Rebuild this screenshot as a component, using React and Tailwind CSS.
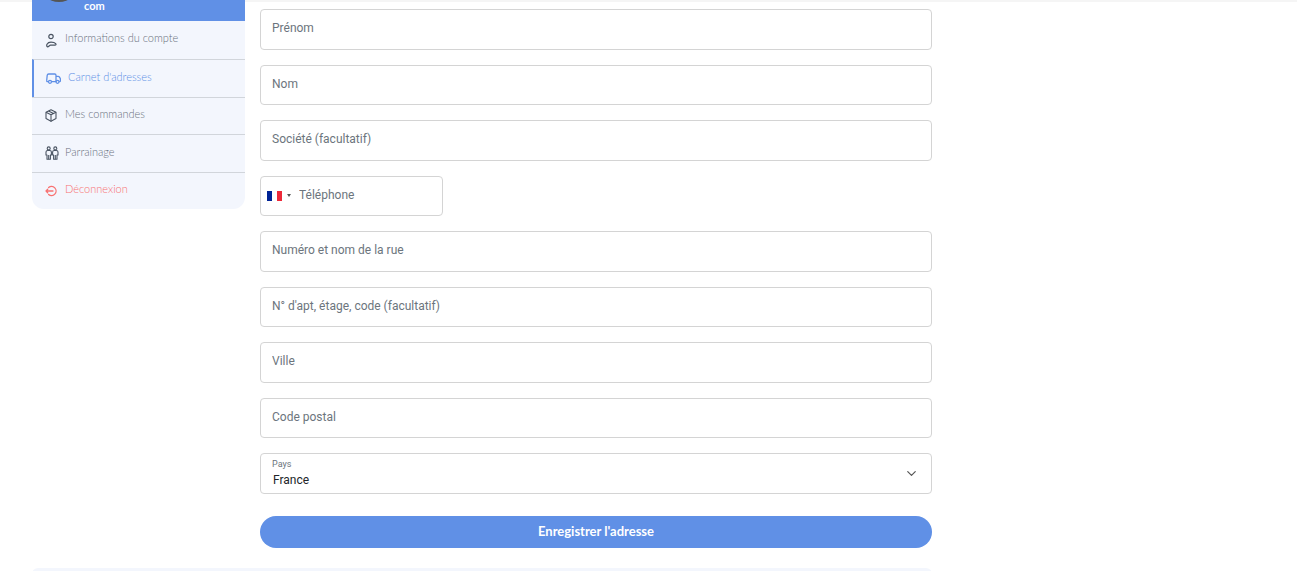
import React from "react";
import { ChevronDown } from "lucide-react";

const UserIcon = () => (
  <svg width="14" height="15" viewBox="0 0 14 15" fill="none" stroke="#4b5563" strokeWidth="1.2" strokeLinecap="round">
    <circle cx="6" cy="3.500" r="2.200" />
    <path d="M2.600 13.800c-.9-.2-1.200-1.400-.6-2.600.7-1.300 2.200-2.100 4-2.100 1.900 0 3.800.5 4.700 1.500.7.800.2 1.600-.8 1.600H5.500c-1 0-1.700 1.400-2.900 1.600z" />
  </svg>
);

const TruckIcon = () => (
  <svg width="15" height="11" viewBox="0 0 15 11" fill="none" stroke="#6090e6" strokeWidth="1.300" strokeLinejoin="round">
    <path d="M2.300 8.600h-.7C.9 8.600.6 8.100.7 7.400l.5-5C1.300 1.500 1.900 1 2.700 1h6c.8 0 1.300.5 1.300 1.200v6.400H5.800" />
    <path d="M10 3.400h2.200c.6 0 1 .3 1.300.7l.9 1.700v2.100c0 .4-.3.7-.7.7h-.6" />
    <circle cx="4" cy="8.800" r="1.500" />
    <circle cx="11.500" cy="8.800" r="1.500" />
  </svg>
);

const BoxIcon = () => (
  <svg width="12" height="13" viewBox="0 0 12 13" fill="none" stroke="#4b5563" strokeWidth="1.100" strokeLinejoin="round">
    <path d="M6 .8l5 2.400v6.400l-5 2.600-5-2.600V3.200z" />
    <path d="M1 3.200l5 2.600 5-2.600M6 5.800v6.600M3.500 2l5 2.500" />
  </svg>
);

const PeopleIcon = () => (
  <svg width="14" height="14" viewBox="0 0 14 14" fill="none" stroke="#4b5563" strokeWidth="1.100" strokeLinejoin="round">
    <circle cx="3.700" cy="2.400" r="1.500" />
    <circle cx="10.300" cy="2.400" r="1.500" />
    <path d="M1 6c0-1 .8-1.500 1.700-1.500h2C5.700 4.500 6.400 5 6.400 6v3H5.400v4.300H2V9H1z" />
    <path d="M7.600 6c0-1 .8-1.500 1.700-1.500h2c1 0 1.700.5 1.700 1.500v3h-1v4.300H8.600V9h-1z" />
    <path d="M3.700 9v4.300M10.300 9v4.300" />
  </svg>
);

const LogoutIcon = () => (
  <svg width="13" height="12" viewBox="0 0 13 12" fill="none" stroke="#f87171" strokeWidth="1.300" strokeLinecap="round" strokeLinejoin="round">
    <path d="M3.600 2.600a4.500 4.500 0 1 1 0 6.800" />
    <path d="M8 6H1M2.700 4.300L1 6l1.700 1.700" />
  </svg>
);

const links = [
  { label: "Informations du compte", icon: <UserIcon />, cls: "h-[38px] text-[#6b7280] pl-[13px] gap-[6px]" },
  { label: "Carnet d'adresses", icon: <TruckIcon />, cls: "h-[37.5px] border-t border-[#d1d5db] text-[#6090e6] pl-[12px] border-l-2 border-l-[#6090e6] gap-[7px]" },
  { label: "Mes commandes", icon: <BoxIcon />, cls: "h-[37.5px] border-t border-[#d1d5db] text-[#6b7280] pl-[13px] gap-[8px]" },
  { label: "Parrainage", icon: <PeopleIcon />, cls: "h-[37.5px] border-t border-[#d1d5db] text-[#6b7280] pl-[13px] gap-[6px]" },
  { label: "Déconnexion", icon: <LogoutIcon />, cls: "h-[37.5px] border-t border-[#d1d5db] text-[#f87171] pl-[13px] gap-[7px]" },
];

const fieldCls = "block h-[40.5px] w-full rounded border border-[#d4d4d4] bg-white pl-[11px] pr-3 pb-[2px] text-[12px] text-[#495057] outline-none placeholder:text-[#6c757d]";

function Field({ placeholder }) {
  return <input className={fieldCls} placeholder={placeholder} />;
}

export default function App() {
  return (
    <div className="relative h-[571px] overflow-hidden bg-white font-['Roboto',sans-serif]">
      <div className="absolute inset-x-0 top-0 h-[2px] bg-[#f5f5f5]" />

      <div className="flex pl-8 gap-[15px]">
        {/* Sidebar */}
        <aside className="relative w-[213px] self-start overflow-hidden rounded-b-xl bg-[#f3f6fd] font-['Lato',sans-serif] text-[11px] font-light">
          <div className="flex h-[21px] items-start overflow-hidden bg-[#6090e6]">
            <div className="ml-[7px] mt-[-38px] h-10 w-10 shrink-0 rounded-full bg-[#555555]" />
            <span className="ml-[5px] text-[11px] font-bold leading-[11px] text-white">com</span>
          </div>
          {links.map((link) => (
            <div key={link.label} className={`flex items-center ${link.cls}`}>
              {link.icon}
              <span className="mb-[3px]">{link.label}</span>
            </div>
          ))}
        </aside>

        {/* Formulaire */}
        <form className="relative flex w-[672px] flex-col gap-[15px] pt-[9px]">
          <Field placeholder="Prénom" />
          <Field placeholder="Nom" />
          <Field placeholder="Société (facultatif)" />
          <div className="flex h-[40.5px] w-[183px] items-center rounded border border-[#d4d4d4] bg-white pl-[6px]">
            <div className="flex h-[10px] w-[15px] shrink-0">
              <div className="flex-1 bg-[#002395]" />
              <div className="flex-1 bg-white" />
              <div className="flex-1 bg-[#ed2939]" />
            </div>
            <div className="ml-[5px] h-0 w-0 shrink-0 border-x-[2.5px] border-t-[3px] border-x-transparent border-t-[#555555]" />
            <input className="ml-[8px] w-[130px] bg-transparent pb-[2px] text-[12px] outline-none placeholder:text-[#6c757d]" placeholder="Téléphone" />
          </div>
          <Field placeholder="Numéro et nom de la rue" />
          <Field placeholder="N° d'apt, étage, code (facultatif)" />
          <Field placeholder="Ville" />
          <Field placeholder="Code postal" />
          <div className="flex h-[40.5px] items-center justify-between rounded border border-[#d4d4d4] bg-white pl-[11px] pr-3">
            <div className="flex flex-col">
              <span className="text-[9px] leading-[11px] text-[#6c757d]">Pays</span>
              <span className="ml-px mt-[3px] text-[12px] leading-[15px] text-[#212529]">France</span>
            </div>
            <ChevronDown size={15} strokeWidth={1.9} className="text-[#555555]" />
          </div>
          <button type="button" className="mt-[7.5px] h-8 rounded-full bg-[#6090e6] font-['Lato',sans-serif] text-[13px] font-bold text-white">
            Enregistrer l'adresse
          </button>
          <div className="ml-[-228px] mt-[5px] h-10 rounded-md bg-[#f3f6fd]" />
        </form>
      </div>
    </div>
  );
}
